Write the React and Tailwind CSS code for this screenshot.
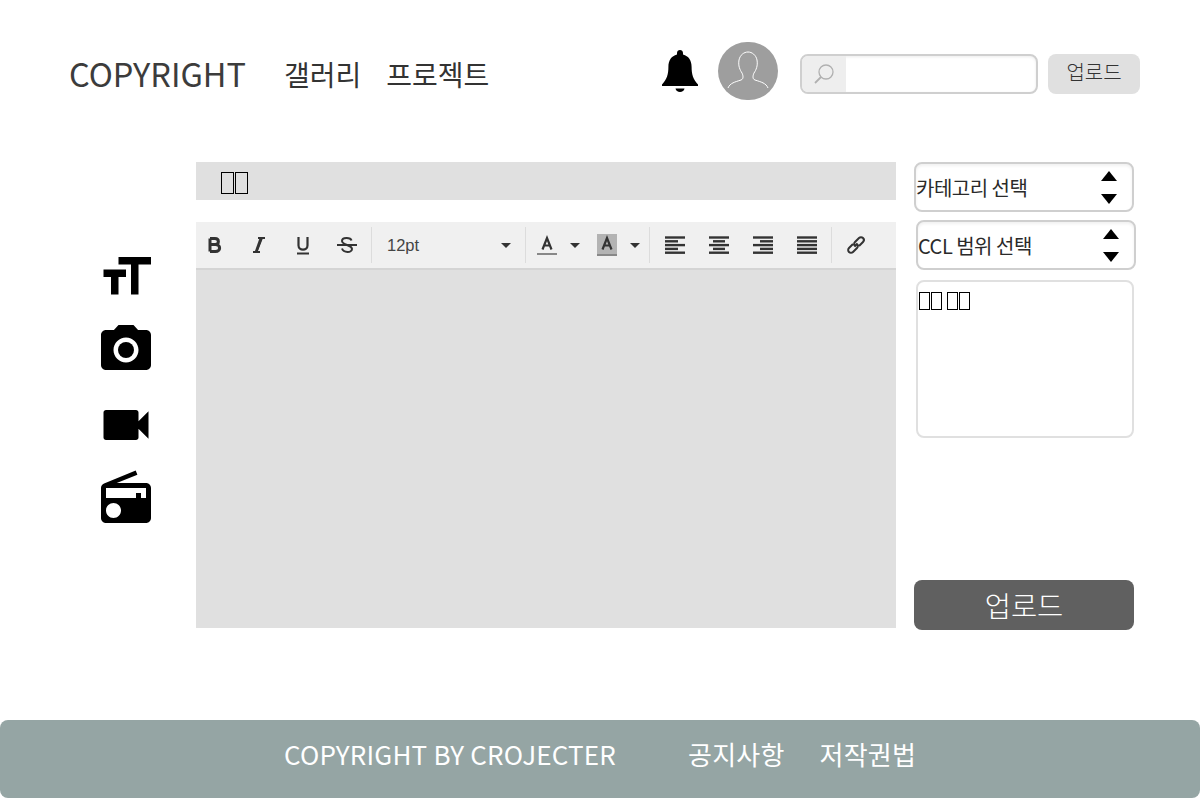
import React from 'react'

const font = { fontFamily: '"Noto Sans CJK KR", "Noto Sans", sans-serif' }

const Sep = () => <div className="w-px h-[36px] bg-[#dcdcdc] shrink-0" />

const Caret = ({ className }) => (
  <svg viewBox="0 0 10 5" className={`w-[10px] h-[5px] shrink-0 ${className || ''}`}>
    <path d="M0 0h10L5 5z" fill="#333" />
  </svg>
)

const ToolIcon = ({ children, className }) => (
  <svg viewBox="0 0 24 24" className={`w-[24px] h-[24px] shrink-0 text-[#333] ${className || ''}`} fill="none" stroke="currentColor">
    {children}
  </svg>
)

const AlignIcon = ({ lines }) => (
  <ToolIcon>
    {lines.map(([x1, x2], i) => (
      <path key={i} d={`M${x1} ${4.500 + i * 3.800}H${x2}`} strokeWidth="2.400" />
    ))}
  </ToolIcon>
)

const Spinner = () => (
  <div className="flex flex-col gap-[13px]">
    <svg viewBox="0 0 16 10" className="w-[16px] h-[10px]"><path d="M8 0l8 10H0z" fill="#000" /></svg>
    <svg viewBox="0 0 16 10" className="w-[16px] h-[10px]"><path d="M0 0h16L8 10z" fill="#000" /></svg>
  </div>
)

const SelectBox = ({ label, className }) => (
  <div className={`flex items-center justify-between w-[220px] h-[50px] border-2 border-[#cfcfcf] rounded-lg bg-white shadow-[inset_0_2px_3px_rgba(0,0,0,0.06)] pr-[15px] text-[20px] tracking-[-0.5px] text-[#2a2a2a] ${className || ''}`}>
    <span className="pt-[1px]">{label}</span>
    <Spinner />
  </div>
)

const SideIcon = ({ d, className, children }) => (
  <svg viewBox="0 0 24 24" className={`w-[60px] h-[60px] ${className || ''}`} fill="#000">
    {children}
    <path d={d} />
  </svg>
)

// the reference shows these labels as missing-glyph boxes
const MissingGlyphs = ({ label, className }) => (
  <span aria-label={label} className="inline-flex gap-[1px]">
    {[...label].map((ch, i) => (
      <span key={i} className={`border-black shrink-0 ${className}`} />
    ))}
  </span>
)

const App = () => {
  return (
    <div className="w-[1200px] h-[800px] bg-white overflow-hidden" style={font}>
      <header className="flex items-center h-[58px] mt-[42px] pl-[69px]">
        <span className="text-[32.500px] font-normal text-[#3c3c3c] leading-none mt-[5px]">COPYRIGHT</span>
        <nav className="flex gap-[25px] ml-[38px] mt-[6px] text-[28px] font-normal text-[#333] leading-none">
          <span>갤러리</span>
          <span>프로젝트</span>
        </nav>
        <svg viewBox="0 0 36 42" className="w-[36px] h-[42px] ml-auto">
          <path d="M18 0c1.700 0 3 1.300 3 3v1.600c5.600 1.400 8.600 6 8.600 12.400 0 7 1.400 12.500 6.400 17.400v1.600H0v-1.600C5 29.500 6.400 24 6.400 17c0-6.400 3-11 8.600-12.400V3c0-1.700 1.300-3 3-3z" fill="#000" />
          <path d="M13.500 38.500h9c-.3 2-2.200 3.500-4.500 3.500s-4.200-1.500-4.500-3.500z" fill="#000" />
        </svg>
        <div className="w-[60px] h-[58px] ml-[20px] rounded-full bg-[#9e9e9e] shrink-0">
          <svg viewBox="0 0 60 58" className="w-full h-full" fill="none" stroke="#fff" strokeWidth="1">
            <path d="M10 46c2-5 7-6 13-8 3-1 2-5 1-7-2-3-4-7-3-13 1-5 5-8 9-8s8 3 9 8c1 6-1 10-3 13-1 2-2 6 1 7 6 2 11 3 13 8" />
          </svg>
        </div>
        <div className="flex items-stretch w-[238px] h-[40px] ml-[22px] mt-[6px] border-2 border-[#cfcfcf] rounded-lg bg-white overflow-hidden shadow-[inset_0_1px_3px_rgba(0,0,0,0.08)]">
          <div className="flex items-center justify-center w-[44px] bg-[#eeeeee]">
            <svg viewBox="0 0 24 24" className="w-[24px] h-[24px]" fill="none" stroke="#b0b0b0" strokeWidth="1.300">
              <circle cx="14" cy="10" r="7" />
              <path d="M9 15l-6 6" strokeWidth="1.800" />
            </svg>
          </div>
        </div>
        <button className="w-[92px] h-[40px] ml-[10px] mt-[6px] mr-[60px] rounded-lg bg-[#e0e0e0] text-[20px] text-[#333] font-light leading-none pb-[4px]">
          업로드
        </button>
      </header>

      <main className="flex mt-[62px] pl-[96px]">
        <aside className="flex flex-col w-[100px] pt-[85px]">
          <SideIcon d="M9 4v3h5v12h3V7h5V4H9zm-6 8h3v7h3v-7h3V9H3v3z" />
          <SideIcon className="mt-[13px]" d="M9 2L7.170 4H4c-1.100 0-2 .9-2 2v12c0 1.100.9 2 2 2h16c1.100 0 2-.9 2-2V6c0-1.100-.9-2-2-2h-3.170L15 2H9zm3 15c-2.760 0-5-2.240-5-5s2.240-5 5-5 5 2.240 5 5-2.240 5-5 5z">
            <circle cx="12" cy="12" r="3.200" />
          </SideIcon>
          <SideIcon className="mt-[15px]" d="M17 10.500V7c0-.55-.45-1-1-1H4c-.55 0-1 .45-1 1v10c0 .55.45 1 1 1h12c.55 0 1-.45 1-1v-3.500l4 4v-11l-4 4z" />
          <SideIcon className="mt-[13px]" d="M3.240 6.150C2.510 6.430 2 7.170 2 8v12c0 1.100.89 2 2 2h16c1.110 0 2-.9 2-2V8c0-1.110-.89-2-2-2H8.300l8.260-3.340L15.880 1 3.240 6.150zM7 20c-1.660 0-3-1.340-3-3s1.340-3 3-3 3 1.340 3 3-1.340 3-3 3zm13-8h-2v-2h-2v2H4V8h16v4z" />
        </aside>

        <section className="w-[700px]">
          <div className="flex items-center h-[38px] pl-[25px] pt-[4px] bg-[#e0e0e0]">
            <MissingGlyphs label="제목" className="w-[13px] h-[22px] border-[1.500px]" />
          </div>
          <div className="mt-[22px] h-[406px] bg-[#e0e0e0] flex flex-col">
            <div className="flex items-center h-[46px] bg-[#f0f0f0] shrink-0">
              <div className="flex gap-[20px] pl-[7px] pr-[12px]">
                <ToolIcon>
                  <path d="M7 5.500v13M7 5.500h5c4.500 0 4.500 6 0 6H7M12.500 11.500c5.500 0 5.500 7 0 7H7" strokeWidth="3" />
                </ToolIcon>
                <ToolIcon>
                  <path d="M11 5h7M6 19h7M15 5l-5.500 14" strokeWidth="2" />
                  <path d="M14 5l-5 14" strokeWidth="2.600" />
                </ToolIcon>
                <ToolIcon>
                  <path d="M7.500 4v8.500c0 5.500 9 5.500 9 0V4M6 20.500h12" strokeWidth="2.200" />
                </ToolIcon>
                <ToolIcon>
                  <path d="M16.500 7.500C15.500 4 7 4 7 8c0 2 2.500 3 5 4 2 .9 5 1.500 5 4 0 4-8.500 4-10-.5M2 12h20" strokeWidth="2" />
                </ToolIcon>
              </div>
              <Sep />
              <div className="flex items-center justify-between w-[153px] pl-[15px] pr-[14px] text-[16.500px] text-[#444] leading-none" style={{ fontFamily: '"Liberation Sans", sans-serif' }}>
                <span>12pt</span>
                <Caret />
              </div>
              <Sep />
              <div className="flex items-center w-[123px] shrink-0">
                <ToolIcon className="ml-[9px]">
                  <path d="M7.500 16.500L12 5l4.500 11.500M9 12.500h6" strokeWidth="2.200" />
                  <path d="M2 21h20" stroke="#888" strokeWidth="2" />
                </ToolIcon>
                <Caret className="ml-[11px]" />
                <ToolIcon className="ml-[15px]">
                  <path d="M2 1h20v20H2z" fill="#b3b3b3" stroke="none" />
                  <path d="M7.500 16.500L12 5l4.500 11.500M9 12.500h6" strokeWidth="2.200" />
                  <path d="M2 22h20" stroke="#888" strokeWidth="2" />
                </ToolIcon>
                <Caret className="ml-[11px]" />
              </div>
              <Sep />
              <div className="flex gap-[20px] pl-[13px] pr-[12px]">
                <AlignIcon lines={[[2, 22], [2, 15], [2, 22], [2, 15], [2, 22]]} />
                <AlignIcon lines={[[2, 22], [6, 18], [2, 22], [6, 18], [2, 22]]} />
                <AlignIcon lines={[[2, 22], [9, 22], [2, 22], [9, 22], [2, 22]]} />
                <AlignIcon lines={[[2, 22], [2, 22], [2, 22], [2, 22], [2, 22]]} />
              </div>
              <Sep />
              <ToolIcon className="ml-[12px]">
                <path d="M10.500 13.500l3-3M9 11l-4 4a2.800 2.800 0 0 0 4 4l4-4a2.800 2.800 0 0 0 0-4M15 13l4-4a2.800 2.800 0 0 0-4-4l-4 4a2.800 2.800 0 0 0 0 4" strokeWidth="2" />
              </ToolIcon>
            </div>
            <div className="h-[2px] bg-[#d4d4d4] shrink-0" />
          </div>
        </section>

        <aside className="w-[222px] ml-[18px] flex flex-col">
          <SelectBox label="카테고리 선택" />
          <SelectBox label="CCL 범위 선택" className="mt-[8px] ml-[2px]" />
          <div className="flex gap-[5px] items-start w-[218px] h-[158px] ml-[2px] mt-[10px] border-2 border-[#e0e0e0] rounded-lg bg-white pt-[10px] pl-[1px]">
            <MissingGlyphs label="내용" className="w-[11px] h-[18px] border" />
            <MissingGlyphs label="입력" className="w-[11px] h-[18px] border" />
          </div>
          <button className="w-[220px] h-[50px] mt-[142px] rounded-lg bg-[#606060] text-white text-[28.500px] font-light leading-none">
            업로드
          </button>
        </aside>
      </main>

      <footer className="flex items-center h-[78px] mt-[90px] pl-[284px] pb-[10px] rounded-lg bg-[#95a5a4] text-white text-[26px] tracking-[0.2px] font-normal leading-none">
        <span>COPYRIGHT BY CROJECTER</span>
        <span className="ml-[72px]">공지사항</span>
        <span className="ml-[35px]">저작권법</span>
      </footer>
    </div>
  )
}

export default App
